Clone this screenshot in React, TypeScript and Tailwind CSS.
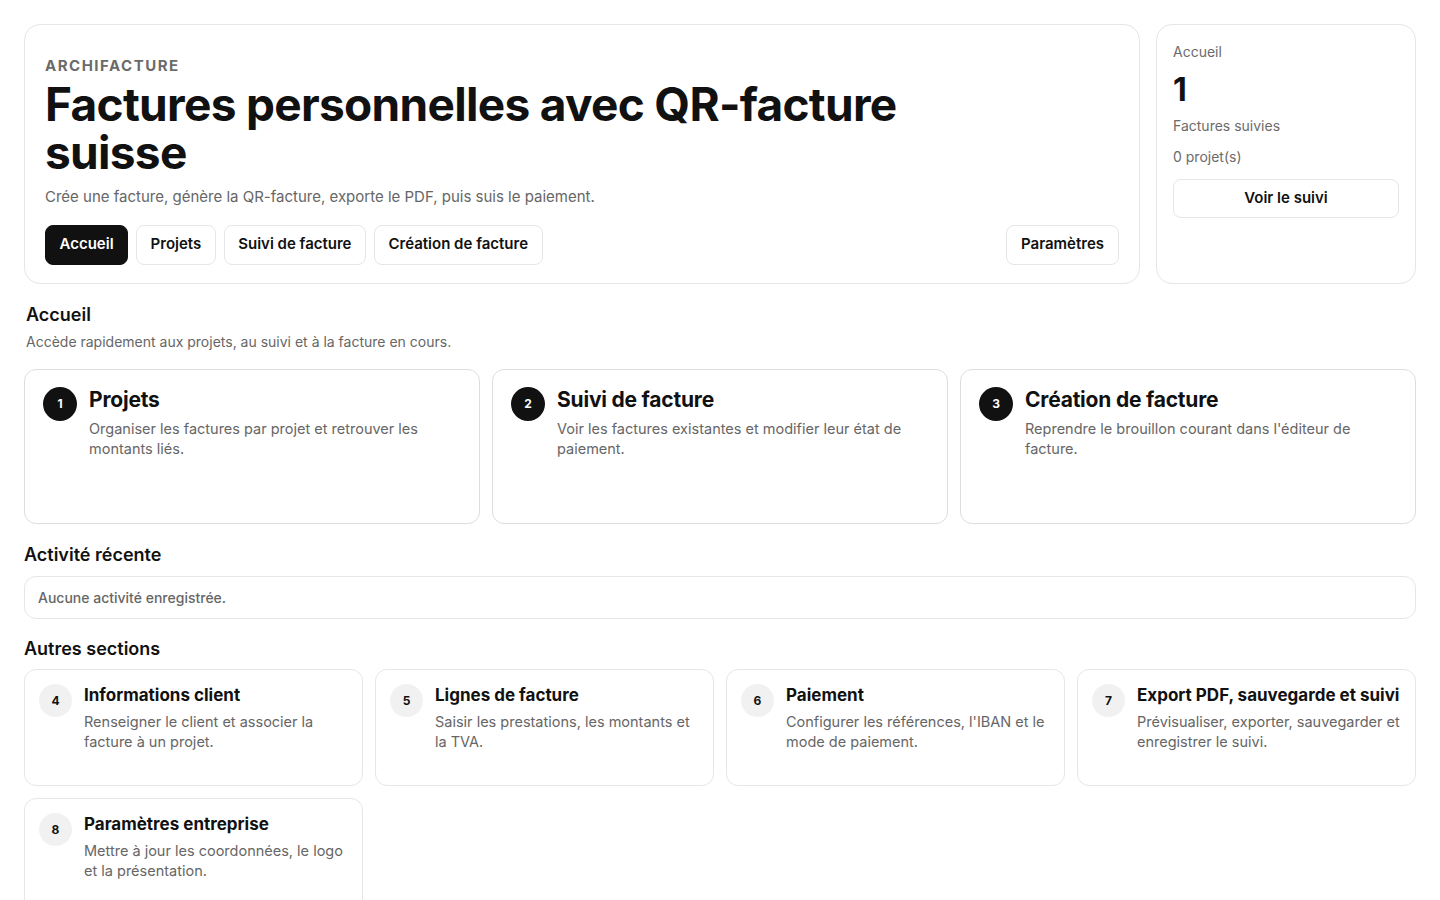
import React from "react";

const MAIN_CARDS = [
  { n: 1, title: "Projets", text: "Organiser les factures par projet et retrouver les montants liés." },
  { n: 2, title: "Suivi de facture", text: "Voir les factures existantes et modifier leur état de paiement." },
  { n: 3, title: "Création de facture", text: "Reprendre le brouillon courant dans l'éditeur de facture." },
];

const OTHER_CARDS = [
  { n: 4, title: "Informations client", text: "Renseigner le client et associer la facture à un projet." },
  { n: 5, title: "Lignes de facture", text: "Saisir les prestations, les montants et la TVA." },
  { n: 6, title: "Paiement", text: "Configurer les références, l'IBAN et le mode de paiement." },
  { n: 7, title: "Export PDF, sauvegarde et suivi", text: "Prévisualiser, exporter, sauvegarder et enregistrer le suivi." },
  { n: 8, title: "Paramètres entreprise", text: "Mettre à jour les coordonnées, le logo et la présentation." },
];

const NAV = ["Accueil", "Projets", "Suivi de facture", "Création de facture"];

export default function App() {
  return (
    <div
      className="min-h-screen bg-white p-6 text-[#111]"
      style={{ fontFamily: "Inter, 'Noto Sans', sans-serif" }}
    >
      {/* HEADER */}
      <div className="grid grid-cols-[1fr_260px] items-start gap-4">
        <header className="rounded-2xl border border-[#e6e6e6] px-5 pb-[18px] pt-[31px]">
          <p className="text-[15px] font-bold uppercase leading-5 tracking-[0.1em] text-[#6b6b6b]">Archifacture</p>
          <h1 className="mt-1 max-w-[880px] text-[46px] font-bold leading-[48px] tracking-[-0.015em]">
            Factures personnelles avec QR-facture suisse
          </h1>
          <p className="mt-[10px] text-[15px] text-[#666]">
            Crée une facture, génère la QR-facture, exporte le PDF, puis suis le paiement.
          </p>
          <nav className="mt-4 flex items-center gap-2">
            {NAV.map((label, i) => (
              <button
                key={label}
                className={
                  i === 0
                    ? "h-10 rounded-lg border border-[#111] bg-[#111] px-[13.5px] text-[15px] font-semibold text-white"
                    : "h-10 rounded-lg border border-[#e6e6e6] bg-white px-[13.5px] text-[15px] font-semibold text-[#111]"
                }
              >
                {label}
              </button>
            ))}
            <button className="ml-auto h-10 rounded-lg border border-[#e6e6e6] bg-white px-[14px] text-[15px] font-semibold">
              Paramètres
            </button>
          </nav>
        </header>

        <aside className="h-[260px] rounded-2xl border border-[#e6e6e6] px-4 pt-4">
          <p className="text-[14px] text-[#6b6b6b]">Accueil</p>
          <p className="mt-2 text-[32px] font-bold leading-[40px]">1</p>
          <p className="mt-[5px] text-[14px] text-[#6b6b6b]">Factures suivies</p>
          <p className="mt-[10px] text-[14px] text-[#6b6b6b]">0 projet(s)</p>
          <button className="mt-3 h-[39px] w-full rounded-lg border border-[#e6e6e6] text-[15px] font-semibold">
            Voir le suivi
          </button>
        </aside>
      </div>

      {/* ACCUEIL */}
      <section className="mt-[19px]">
        <h2 className="px-0.5 text-[18px] font-semibold leading-6">Accueil</h2>
        <p className="mt-1 px-0.5 text-[14px] text-[#666]">Accède rapidement aux projets, au suivi et à la facture en cours.</p>
        <div className="mt-[17px] grid grid-cols-3 gap-3">
          {MAIN_CARDS.map((c) => (
            <div key={c.n} className="flex h-[155px] gap-3 rounded-xl border border-[#dedede] px-[18px] pt-[17px]">
              <span className="flex h-[34px] w-[34px] shrink-0 items-center justify-center rounded-full bg-[#111] text-[12px] font-bold text-white">
                {c.n}
              </span>
              <div>
                <h3 className="text-[21px] font-bold leading-[26px] tracking-[-0.01em]">{c.title}</h3>
                <p className="mt-[6px] max-w-[360px] text-[14.5px] leading-5 text-[#666]">{c.text}</p>
              </div>
            </div>
          ))}
        </div>
      </section>

      {/* ACTIVITE */}
      <section className="mt-[19px]">
        <h2 className="text-[18px] font-semibold leading-6">Activité récente</h2>
        <div className="mt-[9px] rounded-xl border border-[#e6e6e6] px-[13px] py-[10px] text-[14px] font-medium text-[#666]">
          Aucune activité enregistrée.
        </div>
      </section>

      {/* AUTRES */}
      <section className="mt-[18px]">
        <h2 className="text-[18px] font-semibold leading-6">Autres sections</h2>
        <div className="mt-2 grid grid-cols-4 gap-3">
          {OTHER_CARDS.map((c) => (
            <div key={c.n} className="flex h-[117px] gap-3 rounded-xl border border-[#e6e6e6] px-[14px] pt-[14px]">
              <span className="flex h-[33px] w-[33px] shrink-0 items-center justify-center rounded-full bg-[#f1f1f1] text-[12px] font-bold">
                {c.n}
              </span>
              <div className="min-w-0">
                <h3 className="whitespace-nowrap text-[17px] font-bold leading-[22px]">{c.title}</h3>
                <p className="mt-[6px] text-[14.5px] leading-5 text-[#666]">{c.text}</p>
              </div>
            </div>
          ))}
        </div>
      </section>
    </div>
  );
}
